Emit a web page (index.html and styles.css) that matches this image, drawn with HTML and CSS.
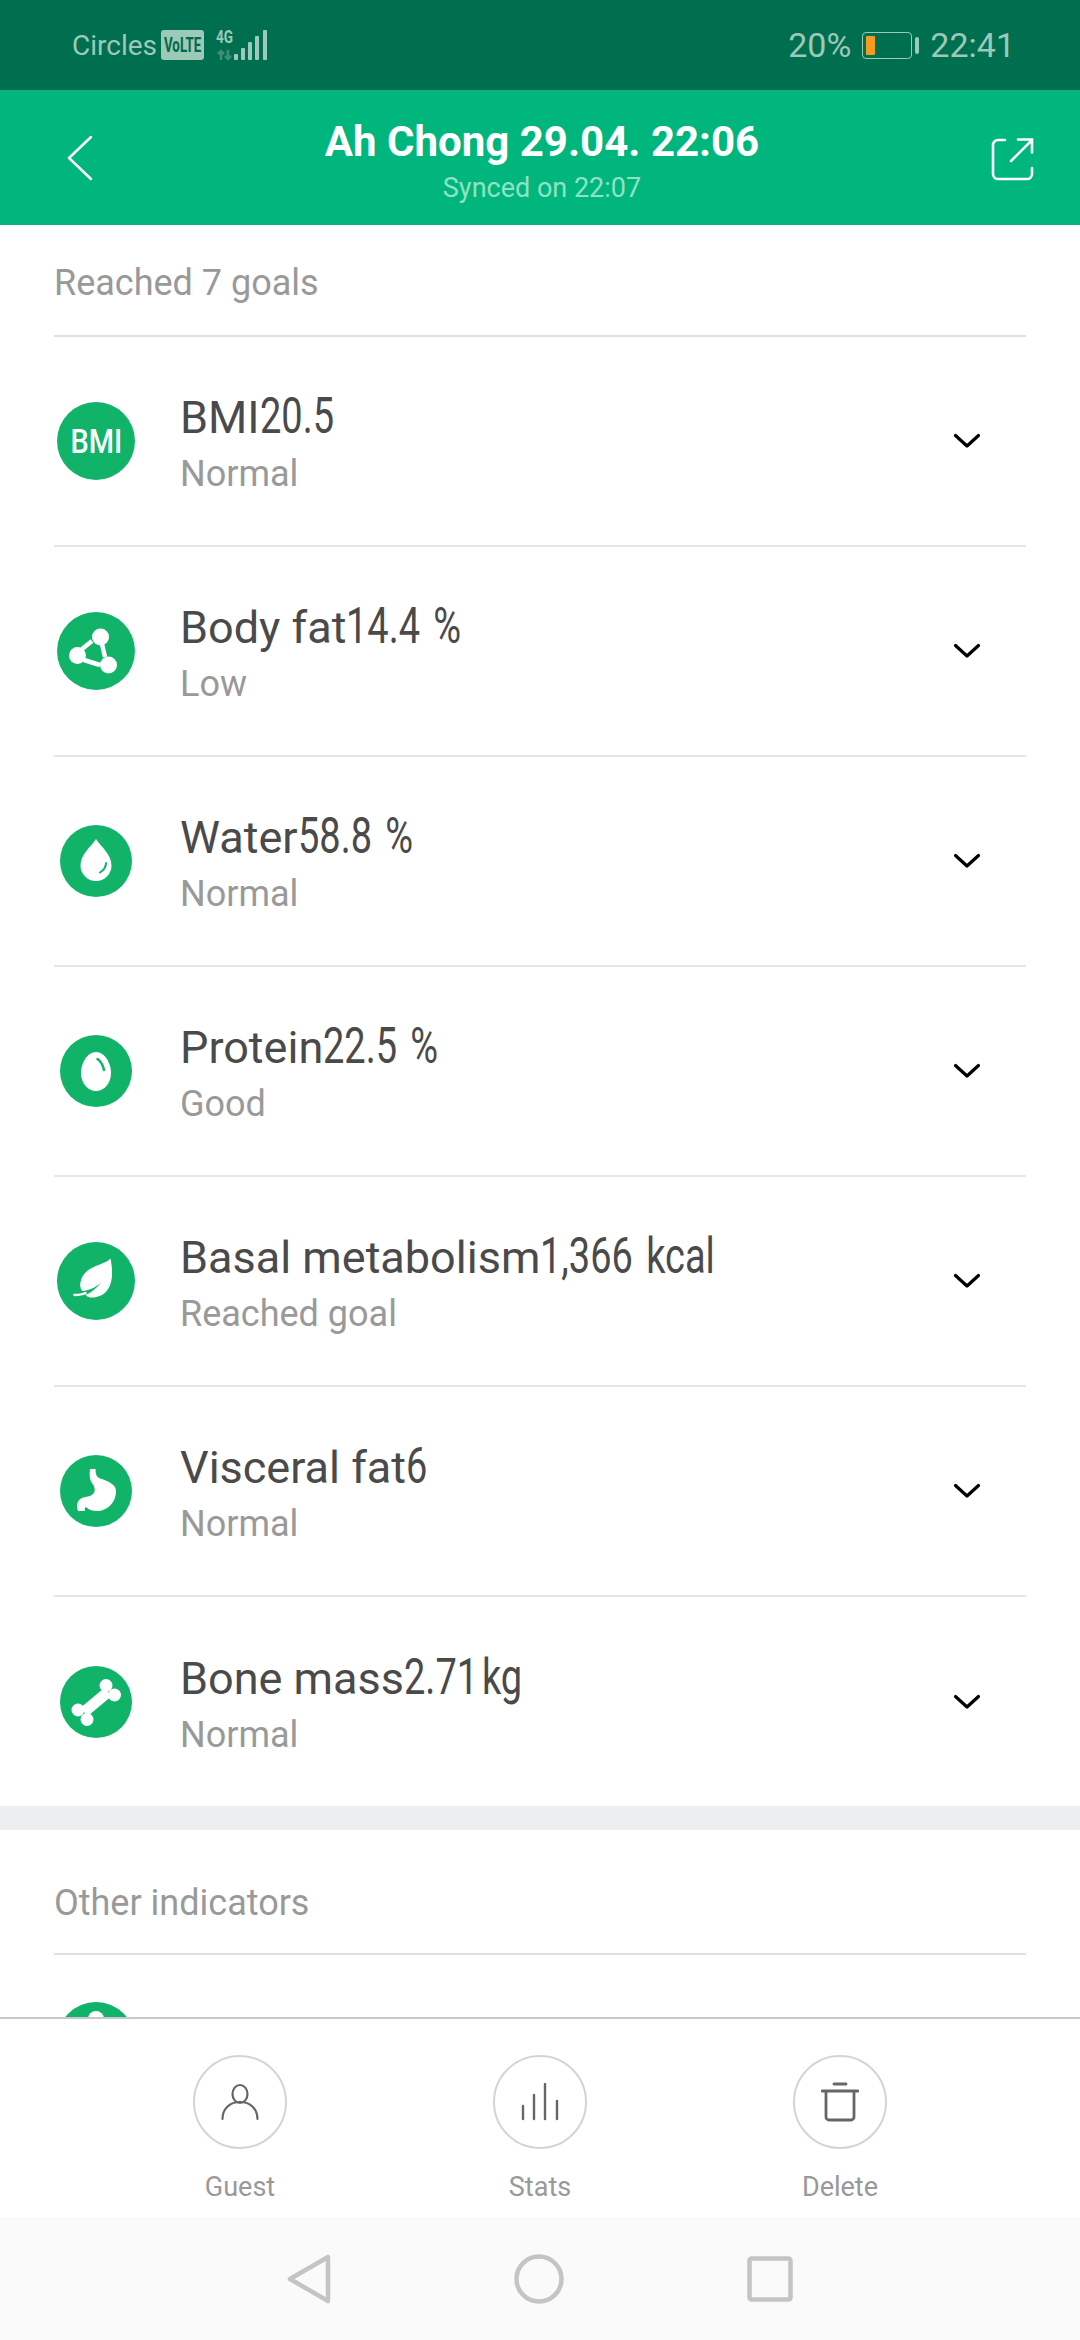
FILE: index.html
```html
<!DOCTYPE html>
<html lang="en">
<head>
  <meta charset="UTF-8">
  <meta name="viewport" content="width=device-width, initial-scale=1.0">
  <title>Weigh-in details</title>
  <link rel="stylesheet" href="styles.css">
</head>
<body>
  <div class="status-bar">
    <div class="status-left">
      <span class="carrier">Circles</span>
      <span class="volte"><span class="volte-text">VoLTE</span></span>
      <svg class="signal" width="52" height="36" viewBox="0 -5 52 36">
        <text x="0" y="13" class="net-text" textLength="17" lengthAdjust="spacingAndGlyphs">4G</text>
        <path d="M5 30v-9M2 24l3-3 3 3M12 20v9M9 26l3 3 3-3" fill="none" stroke="#3f8f76" stroke-width="2.5"/>
        <g fill="#9cc9b8">
          <rect x="18" y="24" width="4" height="6" rx="1"/>
          <rect x="25" y="18" width="4" height="12" rx="1"/>
          <rect x="32" y="12" width="4" height="18" rx="1"/>
          <rect x="39" y="6" width="4" height="24" rx="1"/>
          <rect x="47" y="0" width="4" height="30" rx="1"/>
        </g>
      </svg>
    </div>
    <div class="status-right">
      <span>20%</span>
      <span class="battery"><span class="battery-fill"></span></span>
      <span class="battery-tip"></span>
      <span class="clock">22:41</span>
    </div>
  </div>

  <header class="top-bar">
    <svg class="back" width="26" height="46" viewBox="0 0 26 46">
      <path d="M24 2 2 23l22 21" fill="none" stroke="#fff" stroke-width="2.5" stroke-linecap="round" stroke-linejoin="round"/>
    </svg>
    <div class="top-title">
      <h1>Ah Chong 29.04. 22:06</h1>
      <p>Synced on 22:07</p>
    </div>
    <svg class="share" width="44" height="44" viewBox="0 0 44 44">
      <path d="M14 3H7a5 5 0 0 0-5 5v29a5 5 0 0 0 5 5h29a5 5 0 0 0 5-5v-6" fill="none" stroke="#fff" stroke-width="2.6" stroke-linecap="round"/>
      <path d="M20 24 40 4M27 2.500h14v13" fill="none" stroke="#fff" stroke-width="2.6" stroke-linecap="round"/>
    </svg>
  </header>

  <main class="content">
    <section class="section">
      <h2 class="section-title">Reached 7 goals</h2>

      <div class="row">
        <div class="icon-box"><span class="badge badge-text"><span class="badge-label">BMI</span></span></div>
        <div class="row-text">
          <div class="row-name">BMI<span class="row-value">20.5</span></div>
          <div class="row-state">Normal</div>
        </div>
        <svg class="chevron" width="28" height="16" viewBox="0 0 28 16"><path d="M2.500 2.500 14 13 25.500 2.500" fill="none" stroke="#000" stroke-width="3.200" stroke-linecap="round" stroke-linejoin="round"/></svg>
      </div>

      <div class="row">
        <div class="icon-box">
          <svg class="badge" viewBox="0 0 78 78">
            <circle cx="39" cy="39" r="39" fill="#10b368"/>
            <g fill="#fff">
              <circle cx="43.500" cy="25" r="8.500"/>
              <circle cx="20.500" cy="43.500" r="8.500"/>
              <circle cx="51.500" cy="53" r="8.500"/>
            </g>
            <path d="M35 29 25 37M45 32l3 13M27 48l16 5" fill="none" stroke="#fff" stroke-width="4.500"/>
          </svg>
        </div>
        <div class="row-text">
          <div class="row-name">Body fat<span class="row-value">14.4 %</span></div>
          <div class="row-state">Low</div>
        </div>
        <svg class="chevron" width="28" height="16" viewBox="0 0 28 16"><path d="M2.500 2.500 14 13 25.500 2.500" fill="none" stroke="#000" stroke-width="3.200" stroke-linecap="round" stroke-linejoin="round"/></svg>
      </div>

      <div class="row">
        <div class="icon-box">
          <svg class="badge badge-small" viewBox="0 0 72 72">
            <circle cx="36" cy="36" r="36" fill="#10b368"/>
            <path d="M36 14C31 22 20.500 29 20.500 40.500a15.500 15.500 0 0 0 31 0C51.500 29 41 22 36 14Z" fill="#fff"/>
            <path d="M46 38c0 4-2 7-6 9.500" fill="none" stroke="#10b368" stroke-width="2" stroke-linecap="round"/>
          </svg>
        </div>
        <div class="row-text">
          <div class="row-name">Water<span class="row-value">58.8 %</span></div>
          <div class="row-state">Normal</div>
        </div>
        <svg class="chevron" width="28" height="16" viewBox="0 0 28 16"><path d="M2.500 2.500 14 13 25.500 2.500" fill="none" stroke="#000" stroke-width="3.200" stroke-linecap="round" stroke-linejoin="round"/></svg>
      </div>

      <div class="row">
        <div class="icon-box">
          <svg class="badge badge-small" viewBox="0 0 72 72">
            <circle cx="36" cy="36" r="36" fill="#10b368"/>
            <path d="M36 17c8.500 0 15 11 15 21 0 10-6.500 18-15 18s-15-8-15-18c0-10 6.500-21 15-21Z" fill="#fff"/>
            <path d="M37.500 24c3.500 2.500 5.500 6.500 6.500 11" fill="none" stroke="#10b368" stroke-width="2.500" stroke-linecap="round"/>
          </svg>
        </div>
        <div class="row-text">
          <div class="row-name">Protein<span class="row-value">22.5 %</span></div>
          <div class="row-state">Good</div>
        </div>
        <svg class="chevron" width="28" height="16" viewBox="0 0 28 16"><path d="M2.500 2.500 14 13 25.500 2.500" fill="none" stroke="#000" stroke-width="3.200" stroke-linecap="round" stroke-linejoin="round"/></svg>
      </div>

      <div class="row">
        <div class="icon-box">
          <svg class="badge" viewBox="0 0 78 78">
            <circle cx="39" cy="39" r="39" fill="#10b368"/>
            <path d="M53.500 16.500C47 24 27 23 23.500 40c-.8 4 0 7 2 9 9-1 15-5 19-9-4 5-9 10-16 13 3 3 7 3 11 2 15-3 18-20 14-38.500Z" fill="#fff"/>
            <path d="M17.500 53c4 0 8-.5 11-2" fill="none" stroke="#fff" stroke-width="2.500" stroke-linecap="round"/>
          </svg>
        </div>
        <div class="row-text">
          <div class="row-name">Basal metabolism<span class="row-value">1,366 kcal</span></div>
          <div class="row-state">Reached goal</div>
        </div>
        <svg class="chevron" width="28" height="16" viewBox="0 0 28 16"><path d="M2.500 2.500 14 13 25.500 2.500" fill="none" stroke="#000" stroke-width="3.200" stroke-linecap="round" stroke-linejoin="round"/></svg>
      </div>

      <div class="row">
        <div class="icon-box">
          <svg class="badge badge-small" viewBox="0 0 72 72">
            <circle cx="36" cy="36" r="36" fill="#10b368"/>
            <path d="M30 14h5.500c0 5 1 8 4.500 9.500C49 26 56 30 56 36c0 12-9 20-19 20-4 0-8-1-11-4-1.500 1-1.500 2.500-1 4h-7c-2-5-1-10 3-12.500 3-2 6-1.500 9-2.500 5-2 6-7 3-11.500-3-4-4-7-3-15.500Z" fill="#fff"/>
          </svg>
        </div>
        <div class="row-text">
          <div class="row-name">Visceral fat<span class="row-value">6</span></div>
          <div class="row-state">Normal</div>
        </div>
        <svg class="chevron" width="28" height="16" viewBox="0 0 28 16"><path d="M2.500 2.500 14 13 25.500 2.500" fill="none" stroke="#000" stroke-width="3.200" stroke-linecap="round" stroke-linejoin="round"/></svg>
      </div>

      <div class="row">
        <div class="icon-box">
          <svg class="badge badge-small" viewBox="0 0 72 72">
            <circle cx="36" cy="36" r="36" fill="#10b368"/>
            <path d="M48 26 24 46" stroke="#fff" stroke-width="11"/>
            <g fill="#fff">
              <circle cx="46" cy="19.500" r="6.500"/>
              <circle cx="54.500" cy="29" r="6.500"/>
              <circle cx="18" cy="44" r="6.500"/>
              <circle cx="27" cy="53.500" r="6.500"/>
            </g>
          </svg>
        </div>
        <div class="row-text">
          <div class="row-name">Bone mass<span class="row-value">2.71&#8202;kg</span></div>
          <div class="row-state">Normal</div>
        </div>
        <svg class="chevron" width="28" height="16" viewBox="0 0 28 16"><path d="M2.500 2.500 14 13 25.500 2.500" fill="none" stroke="#000" stroke-width="3.200" stroke-linecap="round" stroke-linejoin="round"/></svg>
      </div>
    </section>

    <section class="section section-other">
      <h2 class="section-title">Other indicators</h2>
      <div class="peek">
        <svg class="badge" viewBox="0 0 78 78">
          <circle cx="39" cy="39" r="39" fill="#10b368"/>
          <circle cx="39" cy="17" r="8" fill="#fff"/>
        </svg>
      </div>
    </section>
  </main>

  <footer class="actions">
    <div class="action">
      <span class="action-circle">
        <svg width="38" height="38" viewBox="0 0 38 38">
          <ellipse cx="19" cy="11" rx="7.500" ry="9" fill="none" stroke="#666" stroke-width="2.200"/>
          <path d="M1.500 36c0-10 7-17 17.500-17s17.500 7 17.500 17" fill="none" stroke="#666" stroke-width="2.200" stroke-linecap="round"/>
        </svg>
      </span>
      <span class="action-label">Guest</span>
    </div>
    <div class="action">
      <span class="action-circle">
        <svg width="38" height="38" viewBox="0 0 38 38">
          <path d="M2 36V23M13 36V12M24 36V1M36 36V18" fill="none" stroke="#666" stroke-width="2.400" stroke-linecap="round"/>
        </svg>
      </span>
      <span class="action-label">Stats</span>
    </div>
    <div class="action">
      <span class="action-circle">
        <svg width="38" height="40" viewBox="0 0 38 40">
          <path d="M13 2h12M1 9h36" fill="none" stroke="#666" stroke-width="2.800" stroke-linecap="round"/>
          <path d="M5 10v25a3 3 0 0 0 3 3h22a3 3 0 0 0 3-3V10" fill="none" stroke="#666" stroke-width="2.800"/>
        </svg>
      </span>
      <span class="action-label">Delete</span>
    </div>
  </footer>

  <nav class="nav-bar">
    <svg width="44" height="50" viewBox="0 0 44 50"><path d="M41 3 3 25l38 22Z" fill="none" stroke="#c4c4c4" stroke-width="4.500" stroke-linejoin="round"/></svg>
    <svg width="50" height="50" viewBox="0 0 50 50"><circle cx="25" cy="25" r="22.500" fill="none" stroke="#c4c4c4" stroke-width="4.500"/></svg>
    <svg width="46" height="46" viewBox="0 0 46 46"><rect x="2.500" y="2.500" width="41" height="41" rx="2" fill="none" stroke="#c4c4c4" stroke-width="4.500"/></svg>
  </nav>
</body>
</html>
```

FILE: styles.css
```css
* {
  box-sizing: border-box;
}

html, body {
  margin: 0;
  padding: 0;
}

body {
  width: 1080px;
  height: 2340px;
  overflow: hidden;
  display: flex;
  flex-direction: column;
  font-family: Roboto, "Liberation Sans", sans-serif;
  background-color: #fff;
}

/* status bar */
.status-bar {
  height: 90px;
  flex: none;
  display: flex;
  justify-content: space-between;
  align-items: center;
  padding: 0 65px 0 72px;
  background-color: #006f50;
  color: #9cc9b8;
  font-size: 34px;
}

.status-left, .status-right {
  display: flex;
  align-items: center;
}

.carrier {
  font-size: 28px;
}

.volte {
  width: 43px;
  height: 30px;
  margin-left: 4px;
  display: flex;
  justify-content: center;
  align-items: center;
  border-radius: 3px;
  background-color: #9cc9b8;
}

.volte-text {
  font-size: 14px;
  line-height: 16px;
  font-weight: 700;
  color: #00684b;
  transform: scale(.95, 1.45);
}

.signal {
  margin: 0 0 4px 12px;
}

.net-text {
  font-size: 18px;
  font-weight: 700;
  fill: #9cc9b8;
}

.battery {
  width: 50px;
  height: 27px;
  margin-left: 11px;
  padding: 3px;
  border: 1.500px solid #9cc9b8;
  border-radius: 4px;
}

.battery-fill {
  display: block;
  width: 9px;
  height: 100%;
  border-radius: 1px;
  background-color: #f79b1c;
}

.battery-tip {
  width: 4px;
  height: 17px;
  margin-left: 3px;
  border-radius: 2px;
  background-color: #9cc9b8;
}

.clock {
  margin-left: 11px;
}

/* green title bar */
.top-bar {
  height: 135px;
  flex: none;
  display: flex;
  justify-content: space-between;
  align-items: center;
  padding: 6px 45px 0 67px;
  background-color: #00b67d;
}

.back {
  margin-bottom: 6px;
}

.share {
  margin-bottom: 3px;
}

.top-title {
  text-align: center;
  color: #fff;
}

.top-title h1 {
  margin: 0;
  font-size: 42px;
  line-height: 50px;
  font-weight: 700;
}

.top-title p {
  margin: 4px 0 0;
  font-size: 27px;
  line-height: 34px;
  color: #8fe3c3;
}

/* list */
.content {
  flex: 1;
  min-height: 0;
  overflow: hidden;
}

.section {
  padding: 0 54px;
}

.section-other {
  border-top: 24px solid #edeef0;
}

.section-title {
  height: 112px;
  margin: 0;
  padding-top: 40px;
  font-size: 36px;
  line-height: 36px;
  font-weight: 400;
  color: #999;
  border-bottom: 2px solid #e0e0e0;
}

.section-other .section-title {
  height: 125px;
  padding-top: 55px;
}

.row {
  height: 210px;
  display: flex;
  align-items: center;
  border-bottom: 2px solid #e6e6e6;
}

.row:last-child {
  height: 209px;
  border-bottom: none;
}

.icon-box {
  width: 84px;
  margin-right: 42px;
  display: flex;
  justify-content: center;
}

.badge {
  width: 78px;
  height: 78px;
  flex: none;
}

.badge-small {
  width: 72px;
  height: 72px;
}

.badge-text {
  display: flex;
  justify-content: center;
  align-items: center;
  border-radius: 50%;
  background-color: #10b368;
  color: #fff;
}

.badge-label {
  font-size: 34px;
  font-weight: 500;
  transform: scaleX(.85);
}

.row-text {
  flex: 1;
  min-width: 0;
  padding-top: 3px;
}

.row-name {
  font-size: 45px;
  line-height: 56px;
  color: #4a4a4a;
  white-space: nowrap;
}

/* no condensed face installed, so the number is squeezed by hand */
.row-value {
  display: inline-block;
  font-size: 50px;
  word-spacing: 5px;
  transform: scaleX(.76);
  transform-origin: left center;
}

.row-state {
  font-size: 36px;
  line-height: 46px;
  margin-top: 5px;
  color: #999;
}

.chevron {
  margin-right: 45px;
}

.peek {
  padding: 47px 0 0 3px;
}

/* bottom actions */
.actions {
  height: 201px;
  flex: none;
  display: flex;
  justify-content: center;
  padding-top: 36px;
  border-top: 2px solid #c8c8c8;
  background-color: #fff;
}

.action {
  width: 300px;
  display: flex;
  flex-direction: column;
  align-items: center;
}

.action-circle {
  width: 94px;
  height: 94px;
  display: flex;
  justify-content: center;
  align-items: center;
  border: 2px solid #d4d4d4;
  border-radius: 50%;
}

.action-label {
  margin-top: 21px;
  font-size: 27px;
  line-height: 34px;
  color: #999;
}

.nav-bar {
  height: 122px;
  flex: none;
  display: flex;
  justify-content: center;
  align-items: center;
  gap: 183px;
  background-color: #fafafa;
}
```
